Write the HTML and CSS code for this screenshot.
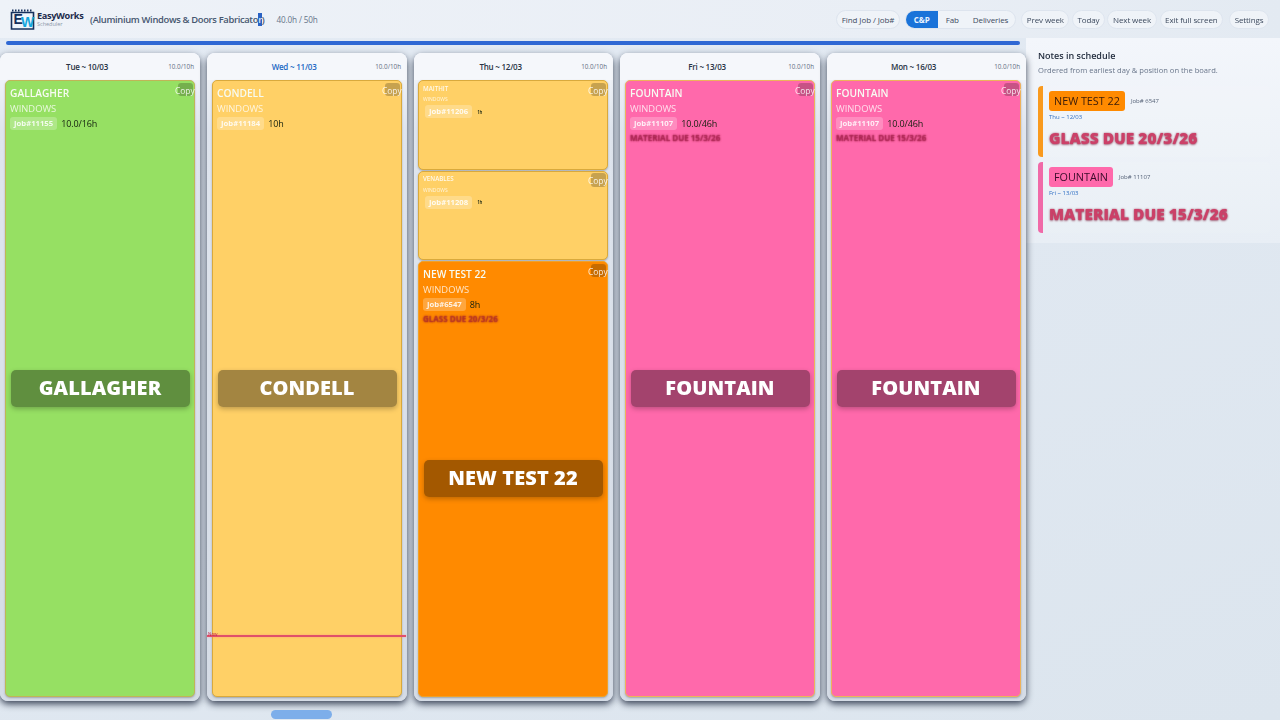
FILE: index.html
```html
<!DOCTYPE html>
<html lang="en">
<head>
<meta charset="utf-8">
<title>EasyWorks Scheduler</title>
<link rel="stylesheet" href="styles.css">
</head>
<body>
<header class="topbar">
  <div class="brand">
    <svg class="logo" width="26" height="21" viewBox="0 0 26 21">
      <path d="M1.5 3.5H23.5V20H1.5Z" fill="#eef5fb" stroke="#16305c" stroke-width="1.6"/>
      <path d="M2 1.5H23" stroke="#16305c" stroke-width="2" stroke-dasharray="1.5 1.5"/>
      <text x="3.5" y="15" class="logo-e">E</text>
      <text x="11" y="18" class="logo-w">W</text>
    </svg>
    <div class="brand-text">
      <div class="brand-name">EasyWorks</div>
      <div class="brand-sub">Scheduler</div>
    </div>
  </div>
  <div class="company">(Aluminium Windows &amp; Doors Fabricato<span class="sel">r</span>)</div>
  <div class="hours">40.0h / 50h</div>
  <nav class="actions">
    <button class="pill">Find Job / Job#</button>
    <div class="seg">
      <button class="seg-item active">C&amp;P</button>
      <button class="seg-item">Fab</button>
      <button class="seg-item">Deliveries</button>
    </div>
    <div class="group">
      <button class="pill">Prev week</button>
      <button class="pill">Today</button>
      <button class="pill">Next week</button>
    </div>
    <div class="group wide">
      <button class="pill">Exit full screen</button>
      <button class="pill">Settings</button>
    </div>
  </nav>
</header>

<main class="main">
  <section class="board-area">
    <div class="progress"></div>
    <div class="board">
      <article class="col">
        <div class="col-head"><span class="col-date">Tue ~ 10/03</span><span class="col-hrs">10.0/10h</span></div>
        <div class="stack">
          <div class="card green">
            <span class="copy">Copy</span>
            <div class="c-name">GALLAGHER</div>
            <div class="c-type">WINDOWS</div>
            <div class="c-row"><span class="job">Job#11155</span><span class="c-h">10.0/16h</span></div>
            <div class="big"><span>GALLAGHER</span></div>
          </div>
        </div>
      </article>
      <article class="col">
        <div class="col-head"><span class="col-date today">Wed ~ 11/03</span><span class="col-hrs">10.0/10h</span></div>
        <div class="stack">
          <div class="card amber">
            <span class="copy">Copy</span>
            <div class="c-name">CONDELL</div>
            <div class="c-type">WINDOWS</div>
            <div class="c-row"><span class="job">Job#11184</span><span class="c-h">10h</span></div>
            <div class="big"><span>CONDELL</span></div>
          </div>
        </div>
        <div class="now"><span class="now-label">Now</span></div>
      </article>
      <article class="col col-narrow">
        <div class="col-head"><span class="col-date">Thu ~ 12/03</span><span class="col-hrs">10.0/10h</span></div>
        <div class="stack">
          <div class="card amber small">
            <span class="copy">Copy</span>
            <div class="c-name">MAITHIT</div>
            <div class="c-type">WINDOWS</div>
            <div class="c-row"><span class="job">Job#11206</span><span class="c-h">1h</span></div>
          </div>
          <div class="card amber small">
            <span class="copy">Copy</span>
            <div class="c-name">VENABLES</div>
            <div class="c-type">WINDOWS</div>
            <div class="c-row"><span class="job">Job#11208</span><span class="c-h">1h</span></div>
          </div>
          <div class="card orange">
            <span class="copy">Copy</span>
            <div class="c-name">NEW TEST 22</div>
            <div class="c-type">WINDOWS</div>
            <div class="c-row"><span class="job">Job#6547</span><span class="c-h">8h</span></div>
            <div class="c-note">GLASS DUE 20/3/26</div>
            <div class="big"><span>NEW TEST 22</span></div>
          </div>
        </div>
      </article>
      <article class="col">
        <div class="col-head"><span class="col-date">Fri ~ 13/03</span><span class="col-hrs">10.0/10h</span></div>
        <div class="stack">
          <div class="card pink">
            <span class="copy">Copy</span>
            <div class="c-name">FOUNTAIN</div>
            <div class="c-type">WINDOWS</div>
            <div class="c-row"><span class="job">Job#11107</span><span class="c-h">10.0/46h</span></div>
            <div class="c-note">MATERIAL DUE 15/3/26</div>
            <div class="big"><span>FOUNTAIN</span></div>
          </div>
        </div>
      </article>
      <article class="col col-narrow">
        <div class="col-head"><span class="col-date">Mon ~ 16/03</span><span class="col-hrs">10.0/10h</span></div>
        <div class="stack">
          <div class="card pink">
            <span class="copy">Copy</span>
            <div class="c-name">FOUNTAIN</div>
            <div class="c-type">WINDOWS</div>
            <div class="c-row"><span class="job">Job#11107</span><span class="c-h">10.0/46h</span></div>
            <div class="c-note">MATERIAL DUE 15/3/26</div>
            <div class="big"><span>FOUNTAIN</span></div>
          </div>
        </div>
      </article>
    </div>
    <div class="scrollbar"><div class="thumb"></div></div>
  </section>

  <aside class="notes">
    <h2 class="notes-title">Notes in schedule</h2>
    <p class="notes-sub">Ordered from earliest day &amp; position on the board.</p>
    <div class="note note-orange">
      <div class="note-head"><span class="note-tag">NEW TEST 22</span><span class="note-job">Job# 6547</span></div>
      <div class="note-date">Thu ~ 12/03</div>
      <div class="note-text">GLASS DUE 20/3/26</div>
    </div>
    <div class="note note-pink">
      <div class="note-head"><span class="note-tag">FOUNTAIN</span><span class="note-job">Job# 11107</span></div>
      <div class="note-date">Fri ~ 13/03</div>
      <div class="note-text">MATERIAL DUE 15/3/26</div>
    </div>
  </aside>
</main>
</body>
</html>
```
FILE: styles.css
```css
* { box-sizing: border-box; }
html, body { margin: 0; height: 720px; overflow: hidden; }
body {
  font-family: "Open Sans", "Noto Sans", "Liberation Sans", sans-serif;
  background: linear-gradient(160deg, #e4ebf4, #dce5ee);
  color: #1f2937;
  filter: blur(.35px);
}
button { font: inherit; margin: 0; }

/* top bar */
.topbar {
  height: 38px;
  display: flex;
  align-items: center;
  padding: 0 11px 0 10px;
  background: linear-gradient(90deg, #eef2f8, #e9eef5 70%, #e3eaf2);
}
.brand { display: flex; align-items: center; gap: 1px; width: 80px; flex: none; }
.logo { display: block; flex: none; }
.logo-e { font: 700 14px "Liberation Sans", sans-serif; fill: #16305c; }
.logo-w { font: 700 14px "Liberation Sans", sans-serif; fill: #12a5dd; }
.brand-text { margin-top: -2px; }
.brand-name { font-size: 9.2px; font-weight: 700; line-height: 11px; color: #1d2c4c; letter-spacing: -.35px; white-space: nowrap; }
.brand-sub { font-size: 5.5px; line-height: 6px; color: #8b97a8; }
.company { font-size: 9.4px; font-weight: 600; color: #46566f; white-space: nowrap; letter-spacing: -.33px; }
.sel { background: #2a62c4; color: #dfe8f8; }
.hours { font-size: 8.2px; color: #66758a; white-space: nowrap; margin-left: 12px; letter-spacing: -.15px; }
.actions { margin-left: auto; display: flex; align-items: center; gap: 5px; letter-spacing: -.1px; }
.group { display: flex; gap: 2.5px; }
.group.wide { gap: 6px; margin-left: -2px; }
.pill {
  height: 19px;
  padding: 0 4.5px;
  font-size: 8px;
  color: #3d4a5e;
  background: #eff3f8;
  border: 1px solid #dde4ee;
  border-radius: 10px;
  white-space: nowrap;
  letter-spacing: inherit;
}
.seg { display: flex; height: 19px; border: 1px solid #dde4ee; border-radius: 10px; background: #eff3f8; overflow: hidden; }
.seg-item { border: 0; background: none; padding: 0 7px; font-size: 8px; color: #3d4a5e; white-space: nowrap; letter-spacing: inherit; }
.seg-item.active { background: #1a73d9; color: #eaf3ff; font-weight: 700; padding: 0 8px; margin-right: 1px; }

/* main */
.main { display: flex; align-items: flex-start; height: 682px; }
.board-area { width: 1026px; flex: none; height: 682px; display: flex; flex-direction: column; }
.progress { height: 4px; margin: 3px 6px 8px; background: #2f68d4; border-radius: 2px; flex: none; }
.board { display: flex; gap: 7px; height: 648px; flex: none; }
.col {
  position: relative;
  width: 200px;
  flex: none;
  height: 648px;
  display: flex;
  flex-direction: column;
  background: linear-gradient(180deg, #f6f8fc, #dfe5ee 12%, #d5dce6);
  border-radius: 8px;
  box-shadow: 0 3px 7px rgba(40, 50, 70, .9);
}
.col-narrow { width: 199px; }
.col-head { height: 27px; flex: none; display: grid; grid-template-columns: 1fr auto; align-items: center; padding: 0 6px 0 0; background: #f5f7fb; border-radius: 8px 8px 0 0; }
.col-date { text-align: center; padding-left: 6px; font-size: 8px; font-weight: 600; color: #273244; white-space: nowrap; letter-spacing: -.22px; }
.col-date.today { color: #2268c4; }
.col-hrs { justify-self: end; font-size: 6.3px; color: #5f6c80; white-space: nowrap; }
.stack { flex: 1; display: flex; flex-direction: column; gap: 1px; padding: 0 5px 4px; }
.col-narrow .stack { padding-left: 4px; }

.card {
  position: relative;
  flex: 1;
  border-radius: 5px;
  border: 1.5px solid #d8ab3e;
  padding: 4.5px 4px 0;
  color: #fff;
  box-shadow: 0 1px 2px rgba(60, 60, 60, .35);
}
.green { background: #96e063; border-color: #c0b557; }
.amber { background: #ffd066; border-color: #d9a93c; }
.orange { background: #ff8a00; border-color: #f0a128; }
.pink { background: #ff69ab; border-color: #eeb25a; }
.card.small { flex: none; height: 89.5px; }
.card.small .c-name { font-size: 6.2px; line-height: 8px; font-weight: 600; margin-top: -1px; color: rgba(255, 255, 255, .85); }
.card.small .c-type { font-size: 5px; line-height: 6px; margin-top: 3.5px; }
.card.small .c-row { margin-top: 3px; padding-left: 2px; }
.card.small .job { line-height: 13px; }
.card.small .c-h { font-size: 4.5px; font-weight: 600; margin-left: 5px; }
.c-name { font-size: 10.2px; font-weight: 600; line-height: 14px; white-space: nowrap; color: #f7fbf2; }
.c-type { font-size: 9.4px; line-height: 12px; margin-top: 3px; color: rgba(255, 255, 255, .78); }
.c-row { display: flex; align-items: center; margin-top: 2px; }
.job { font-size: 7.7px; font-weight: 700; line-height: 13px; padding: 0 4px; border-radius: 3px; background: rgba(255, 255, 255, .24); color: rgba(255, 255, 255, .85); white-space: nowrap; }
.c-h { font-size: 9px; margin-left: 4px; color: #14200f; white-space: nowrap; letter-spacing: -.1px; }
.c-note { font-size: 8px; font-weight: 700; margin-top: 2px; line-height: 12px; color: rgba(178, 40, 90, .25); text-shadow: 0 0 2px rgba(160, 30, 70, .95), 0 0 1.5px rgba(160, 30, 70, .7); white-space: nowrap; }
.orange .c-note { color: rgba(190, 50, 40, .3); text-shadow: 0 0 2px rgba(170, 40, 40, .95), 0 0 1.5px rgba(170, 40, 40, .7); }
.copy {
  position: absolute;
  z-index: 0;
  top: 2.5px;
  right: 0;
  font-size: 8.4px;
  line-height: 14px;
  width: 19px;
  text-align: right;
  color: rgba(255, 255, 255, .85);
  white-space: nowrap;
}
.copy::before {
  content: "";
  position: absolute;
  z-index: -1;
  right: 1.5px;
  top: -1px;
  width: 15px;
  height: 13.5px;
  border-radius: 3px;
  background: rgba(0, 0, 0, .22);
}
.big {
  position: absolute;
  left: 4.5px;
  right: 4.5px;
  top: 50%;
  height: 37px;
  margin-top: -19px;
  padding-bottom: 2px;
  display: flex;
  align-items: center;
  justify-content: center;
  background: rgba(0, 0, 0, .36);
  border-radius: 5px;
  box-shadow: 0 2px 5px rgba(0, 0, 0, .25);
}
.big span { font-size: 20px; font-weight: 800; color: #fff; white-space: nowrap; letter-spacing: .1px; }
.now { position: absolute; left: 0; right: 1px; top: 582px; height: 2px; background: #e0506a; box-shadow: 0 0 2px rgba(255, 120, 120, .6); }
.now-label { position: absolute; left: 1px; top: -4px; font-size: 4.5px; line-height: 6px; color: #c2264a; }

.scrollbar { flex: 1; position: relative; margin-top: 7px; }
.thumb { position: absolute; left: 271px; top: 2px; width: 61px; height: 9px; border-radius: 5px; background: #7daeea; }

/* notes */
.notes {
  flex: 1;
  height: 205px;
  padding: 11px 10px 0 12px;
  background: linear-gradient(180deg, #f3f6fb, #e8eef5);
}
.notes-title { margin: 0; font-size: 9px; font-weight: 600; line-height: 13px; color: #1f2a3b; }
.notes-sub { margin: 2px 0 0; font-size: 7.6px; line-height: 12px; color: #69768a; white-space: nowrap; }
.note { margin-top: 10px; height: 71px; padding: 5px 0 0 6px; border-left: 5px solid; border-radius: 4px; background: rgba(255, 255, 255, .08); }
.note + .note { margin-top: 5px; }
.note-orange { border-color: #f99a1e; }
.note-pink { border-color: #f06aa8; }
.note-head { display: flex; align-items: center; gap: 6px; }
.note-tag { font-size: 10.8px; font-weight: 500; line-height: 20px; padding: 0 5px; border-radius: 3px; color: #3a1c0a; white-space: nowrap; }
.note-orange .note-tag { background: #ff8a00; }
.note-pink .note-tag { background: #ff69ab; color: #3a0c2a; }
.note-job { font-size: 6px; color: #556277; white-space: nowrap; }
.note-date { font-size: 6px; line-height: 10px; margin-top: 1px; color: #2f6fc4; }
.note-text { font-size: 15.5px; font-weight: 800; line-height: 20px; margin-top: 6px; color: #cc4068; text-shadow: 0 0 2px rgba(150, 40, 70, .7), 0 1px 2px rgba(120, 30, 60, .5); white-space: nowrap; }
```
